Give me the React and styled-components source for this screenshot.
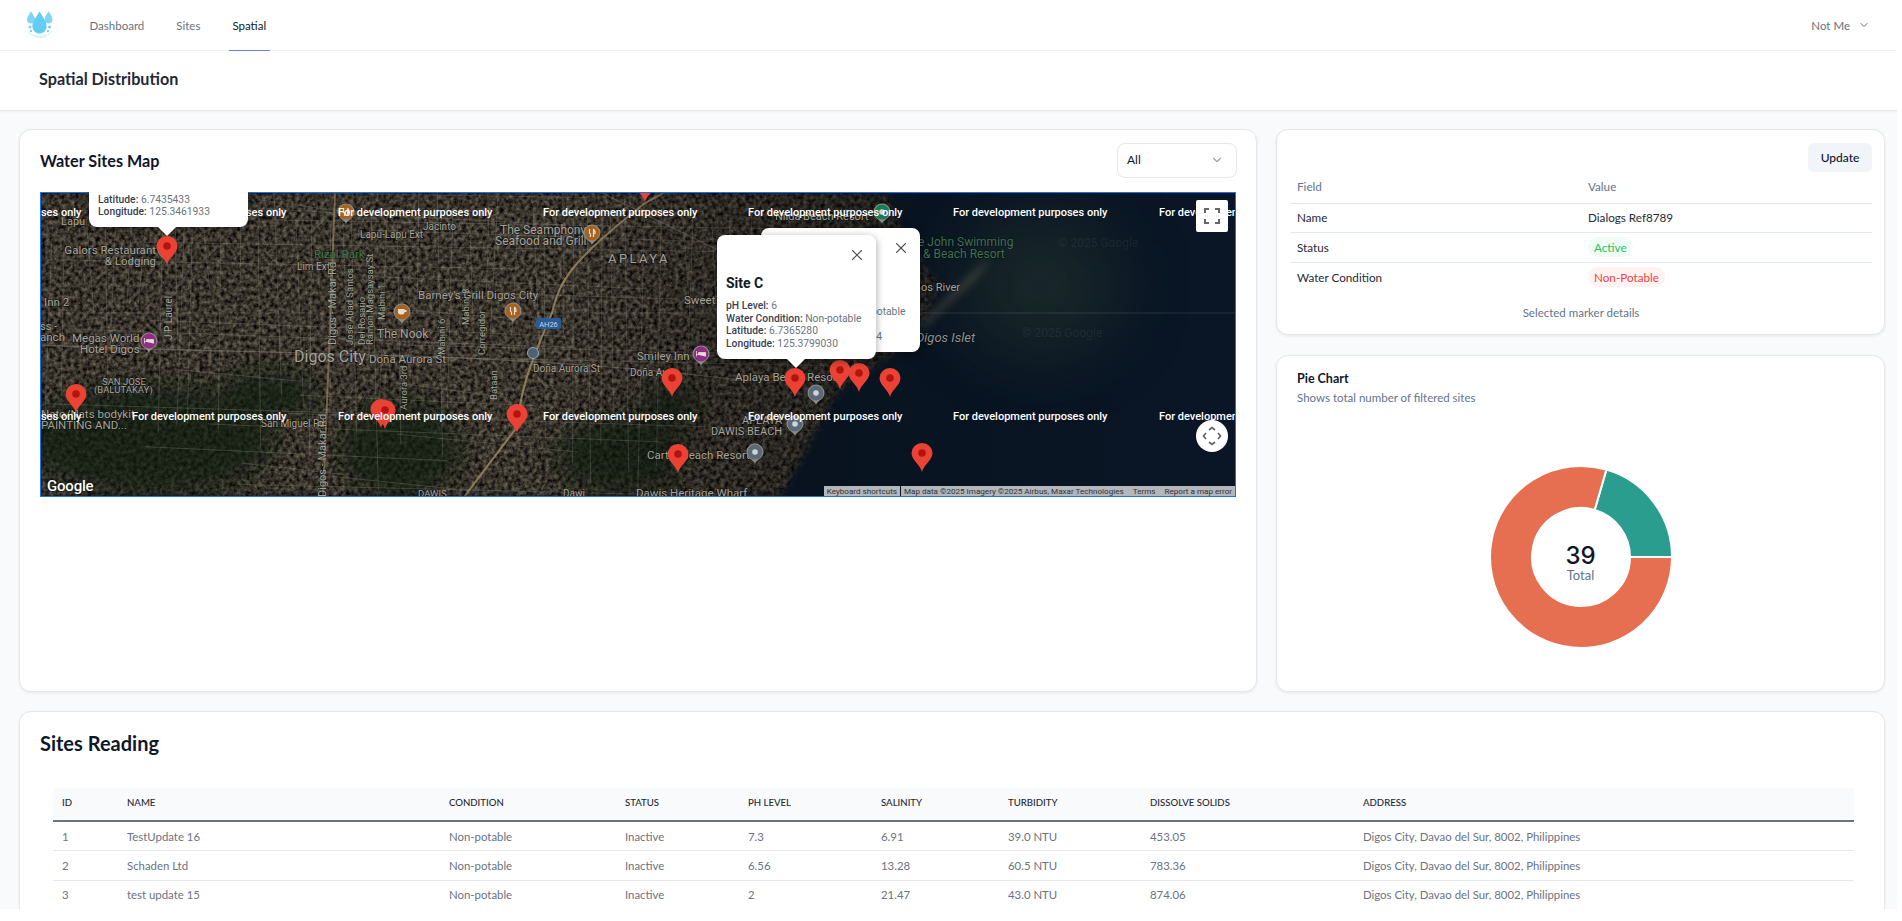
import React, { useMemo } from "react";
import styled, { createGlobalStyle } from "styled-components";
import { ChevronDown, X } from "lucide-react";

const UI = `"Lato", "Inter", "Liberation Sans", sans-serif`;
const MAPF = `"Roboto", "Liberation Sans", sans-serif`;

const Global = createGlobalStyle`
  html, body { margin: 0; padding: 0; background: #fff; overflow: hidden; }
  * { box-sizing: border-box; }
  body { font-family: ${UI}; }
`;

const Frame = styled.div`
  width: 1897px; height: 909px; overflow: hidden; background: #f9fafb;
  display: flex; flex-direction: column;
`;
const NavBar = styled.header`
  height: 51px; flex: none; background: #fff; border-bottom: 1px solid #f0f1f3;
  display: flex; align-items: stretch; padding: 0 27px 0 26px;
`;
const LogoBox = styled.div` width: 28px; height: 30px; margin-top: 9px; flex: none; `;
const NavLinks = styled.nav` display: flex; margin-left: 32px; gap: 25px; `;
const NavLink = styled.a`
  display: flex; align-items: center; padding: 0 3.5px; font-size: 11.5px; height: 51px;
  color: ${p => (p.$active ? "#111827" : "#6b7280")};
  border-bottom: 1px solid ${p => (p.$active ? "#6b7ff0" : "transparent")};
`;
const UserMenu = styled.div`
  margin-left: auto; display: flex; align-items: center; gap: 8px; font-size: 11.5px; color: #6b7280;
`;
const PageHeader = styled.div`
  height: 60px; flex: none; background: #fff; border-bottom: 1px solid #e5e7eb;
  box-shadow: 0 1px 2px rgba(0,0,0,.04); display: flex; align-items: center; padding: 0 0 5px 39px;
`;
const PageTitle = styled.h1` margin: 0; font-size: 16.2px; font-weight: 700; color: #1f2937; `;
const Content = styled.main`
  padding: 18px 12px 0 19px; display: flex; flex-direction: column; gap: 19px;
`;
const TopGrid = styled.div` display: grid; grid-template-columns: 1238px 609px; gap: 19px; height: 563px; `;
const Card = styled.section`
  background: #fff; border: 1px solid #e5e7eb; border-radius: 12px;
  box-shadow: 0 1px 3px rgba(0,0,0,.08);
`;
const MapCard = styled(Card)` padding: 12px 20px 0 20px; `;
const MapHead = styled.div` display: flex; align-items: center; justify-content: space-between; height: 36px; margin-bottom: 14px; `;
const CardTitle = styled.h2` margin: 0; font-size: 16.2px; font-weight: 700; color: #0f172a; `;
const SelectBox = styled.div`
  width: 120px; height: 35px; margin-right: -1px; border: 1px solid #e5e7eb; border-radius: 8px; display: flex; align-items: center;
  justify-content: space-between; padding: 0 12px 1px 9px; font-size: 12px; color: #111827; background: #fff;
`;
const MapFrame = styled.div`
  position: relative; width: 1196px; height: 305px; overflow: hidden; background: #07111c;
  outline: 1px solid #1a73e8; outline-offset: -1px; font-family: ${MAPF};
`;
const MapArt = styled.svg` display: block; width: 1196px; height: 305px; `;
const InfoWindow = styled.div`
  position: absolute; width: 159px; background: #fff; border-radius: 8px; box-shadow: 0 2px 7px 1px rgba(0,0,0,.3);
  left: ${p => p.$x}px; top: ${p => p.$y}px; height: ${p => p.$h}px; padding: 0 9px; font-size: 10.3px; line-height: 12.7px; color: #6b7280;
  &::after {
    content: ""; position: absolute; left: ${p => p.$tip}px; bottom: -9px; border-left: 9px solid transparent;
    border-right: 9px solid transparent; border-top: 9px solid #fff; display: ${p => (p.$noTip ? "none" : "block")};
  }
`;
const InfoClose = styled.span` position: absolute; right: 10px; top: 11px; color: #555; display: flex; `;
const InfoName = styled.div` margin-top: 39px; margin-bottom: 8px; font-size: 14px; line-height: 18px; font-weight: 700; color: #111827; `;
const InfoLine = styled.div` white-space: nowrap; `;
const InfoKey = styled.b` font-weight: 500; color: #374151; `;
const InfoTail = styled.div` position: absolute; left: 9px; bottom: 8px; `;
const MapButton = styled.div`
  position: absolute; right: 8px; width: 32px; height: 32px; background: #fff; display: flex; align-items: center; justify-content: center;
  top: ${p => p.$y}px; border-radius: ${p => (p.$round ? "50%" : "2px")}; color: #666;
`;
const Attribution = styled.div`
  position: absolute; right: 1px; bottom: 1px; height: 10px; display: flex; gap: 1px; font-size: 8.1px; line-height: 10px; color: #333;
`;
const AttrCell = styled.span`
  background: rgba(245,245,245,.72); padding: 0 3px; white-space: nowrap; display: flex; gap: 9px;
`;
const GoogleMark = styled.div` position: absolute; left: 7px; bottom: 2px; color: #fff; font-size: 15px; line-height: 18px; font-weight: 500; letter-spacing: -.2px; text-shadow: 0 0 2px #000; `;

const SideColumn = styled.div` display: grid; grid-template-rows: 206px 337px; gap: 20px; `;
const DetailCard = styled(Card)` padding: 13px 12px 0 13px; display: flex; flex-direction: column; `;
const UpdateRow = styled.div` display: flex; justify-content: flex-end; `;
const UpdateButton = styled.button`
  width: 64px; height: 29px; border: 0; border-radius: 6px; background: #f1f5f9; color: #0f172a; font: 500 12px ${UI};
`;
const DetailTable = styled.table` width: 100%; border-collapse: collapse; table-layout: fixed; font-size: 11.7px; color: #1f2937; `;
const DetailHead = styled.th`
  text-align: left; font-weight: 400; color: #64748b; height: 31px; padding: 0 0 2px 7px; border-bottom: 1px solid #e2e8f0;
`;
const DetailCell = styled.td`
  height: 29.5px; padding: 0 0 ${p => (p.$up ? "2px" : "0")} 7px; border-bottom: ${p => (p.$last ? "0" : "1px solid #e2e8f0")};
`;
const Badge = styled.span`
  display: inline-block; padding: 0 6px; height: 20px; line-height: 20px; border-radius: 10px;
  background: ${p => (p.$ok ? "#f0fdf4" : "#fef2f2")}; color: ${p => (p.$ok ? "#22c55e" : "#ef4444")};
`;
const Caption = styled.div` text-align: center; font-size: 11.5px; color: #64748b; margin-top: 14px; `;
const PieCard = styled(Card)` padding: 15px 20px; display: flex; flex-direction: column; `;
const PieTitle = styled.div` font-size: 12.5px; line-height: 16px; font-weight: 700; color: #0f172a; `;
const PieSub = styled.div` font-size: 11.5px; line-height: 16px; margin-top: 3px; color: #64748b; `;
const DonutWrap = styled.div` margin: 58px auto 0; position: relative; width: 186px; height: 186px; `;
const DonutLabel = styled.div` position: absolute; inset: 0; display: flex; flex-direction: column; align-items: center; justify-content: center; padding-top: 12px; `;
const DonutNum = styled.div` font-family: "Inter", sans-serif; font-size: 24px; line-height: 23px; font-weight: 500; color: #0f172a; `;
const DonutCap = styled.div` font-size: 13px; line-height: 16px; color: #64748b; `;

const ReadingCard = styled(Card)` padding: 19px 32px 0 33px; height: 300px; `;
const ReadingTitle = styled.h2` margin: 0 0 33px -13px; font-size: 20px; line-height: 24px; font-weight: 700; color: #0f172a; `;
const ReadTable = styled.table` width: 1801px; table-layout: fixed; border-collapse: collapse; `;
const ReadHead = styled.th`
  height: 33px; background: #f9fafb; border-bottom: 2px solid #6b7280; text-align: left; padding: 0 0 3px 9px;
  font-size: 9.6px; font-weight: 500; color: #1f2937; text-transform: uppercase;
`;
const ReadCell = styled.td`
  height: 29.5px; border-bottom: 1px solid #e5e7eb; padding: 0 0 0 9px; font-size: 11.4px; color: #6b7280; white-space: nowrap;
`;

const cols = [65, 322, 176, 123, 133, 127, 142, 213, 500];
const heads = ["ID", "Name", "Condition", "Status", "pH Level", "Salinity", "Turbidity", "Dissolve Solids", "Address"];
const ADDR = "Digos City, Davao del Sur, 8002, Philippines";
const rows = [
  [1, "TestUpdate 16", "Non-potable", "Inactive", "7.3", "6.91", "39.0 NTU", "453.05", ADDR],
  [2, "Schaden Ltd", "Non-potable", "Inactive", "6.56", "13.28", "60.5 NTU", "783.36", ADDR],
  [3, "test update 15", "Non-potable", "Inactive", "2", "21.47", "43.0 NTU", "874.06", ADDR],
];

const pins = [[167,265],[76,413],[381,428],[385,429],[517,433],[645,202],[672,397],[795,397],[840,389],[859,392],[890,397],[678,473],[922,472]];
const pois = [
  [346,224,"#a8621f","fork"],[592,245,"#a8621f","fork"],[402,324,"#a8621f","cup"],[513,323,"#a8621f","fork"],[149,353,"#8d2f85","bed"],[882,224,"#1d7a52","dot"],
  [701,366,"#8d2f85","bed"],[816,405,"#5c6a78","dot"],[795,436,"#5c6a78","dot"],[755,464,"#5c6a78","dot"],[166,262,"#8d2f85","bed"],
];
const labels = [
  ["Galors Restaurant",156,254,11.5,"end"],["& Lodging",156,265,11.5,"end"],["Lapu",61,225,11],["Rizal Park",314,258,11.5,"start","#3d7a4c"],
  ["Lim Ext",297,270,10],["Lapu-Lapu Ext",360,238,10],["Jacinto",423,230,10],["The Seamphony",500,234,12],["Seafood and Grill",495,245,12],
  ["Barney's Grill Digos City",418,299,11.5],["The Nook",377,338,12],["Digos City",294,362,16],["Doña Aurora St",369,363,11.5],
  ["Doña Aurora St",533,372,10],["Megas World",72,342,11.5],["Hotel Digos",80,353,11.5],["Inn 2",44,306,11.5],["anch",40,341,11.5],
  ["ss -",40,330,11],["SAN JOSE",102,385,9.5],["(BALUTAKAY)",94,393,9.5],["Nato/Nats bodykit",41,418,11.5],["PAINTING AND...",41,429,11.5],
  ["San Miguel Rd",261,427,10],["Smiley Inn",637,360,11.5],["Sweet",684,304,11.5],["Doña Au",630,376,10],["Aplaya Beach Resort",735,381,11.5],
  ["e John Swimming",918,246,12,"start","#3f7050"],["& Beach Resort",923,258,12,"start","#3f7050"],["os River",921,291,11],["APLAYA",742,424,11],
  ["DAWIS BEACH",711,435,11],["Carter Beach Resort",647,459,11.5],["Dawis Heritage Wharf",636,497,11.5],["Nilda Beach Resort",775,220,11],["DAWIS",418,497,9.5],["Dawi",563,497,10],
];
const vertical = [
  ["J P Laurel",172,340,10],["Digos - Makar Rd",336,345,11],["Digos - Makar Rd",326,497,11],["Jose Abad Santos",353,345,9.5],["Del Rosario",365,345,9.5],
  ["Ramon Magsaysay St",373,345,9.5],["Mabini 1",385,320,9.5],["Mabini 6",445,355,9.5],["Mabini 8",469,325,9.5],["Corregidor",485,355,9.5],["Aurora 3rd",407,410,9.5],["Bataan",497,400,9.5],
];

function seeded(n) { let s = n; return () => (s = (s * 16807) % 2147483647) / 2147483647; }

function Pin({ x, y }) {
  return (
    <g transform={`translate(${x} ${y})`}>
      <path d="M0 0C-1.5-7-10.5-12-10.5-19A10.5 10 0 1 1 10.5-19C10.5-12 1.5-7 0 0Z" fill="#ea4335" />
      <circle cy="-19" r="3.8" fill="#b3140f" />
    </g>
  );
}
const glyphs = {
  fork: <path d="M-2.5-16V-12.5Q-2.5-11-1.5-11V-8M1.5-16V-8M1.5-16Q3.5-14 3-11.5H1.5" fill="none" stroke="#e3ddd2" strokeWidth="1.2" />,
  cup: <path d="M-4-15H2.5V-11.5Q2.5-9.5 0-9.5H-1.5Q-4-9.5-4-11.5ZM2.5-14H4.5V-12H2.5" fill="#e3ddd2" />,
  bed: <path d="M-4.5-9.5V-15M-4.5-11.5H4.5V-9.5M-2.5-13.5H4.5V-11.5H-2.5Z" fill="#e3ddd2" stroke="#e3ddd2" strokeWidth=".8" />,
  dot: <circle cy="-12" r="2.8" fill="#cfd4d8" />,
};
function Poi({ x, y, c, g }) {
  return (
    <g transform={`translate(${x} ${y})`}>
      <path d="M0 0C-1-4-8.5-6-8.5-12A8.5 8.5 0 1 1 8.5-12C8.5-6 1-4 0 0Z" fill="#8d8d8a" />
      <circle cy="-12" r="7.4" fill={c} />
      {glyphs[g]}
    </g>
  );
}

function MapDrawing() {
  const roads = useMemo(() => {
    const r = seeded(77); const out = [];
    for (let x = 40; x < 960; x += 8 + r() * 14) {
      const t = (r() - .5) * 16; out.push(`M${x} ${192 + r() * 40}L${x + t} ${290 + r() * 210}`);
    }
    for (let y = 192; y < 500; y += 7 + r() * 11) {
      const a = 40 + r() * 400; out.push(`M${a} ${y}L${a + 90 + r() * 520} ${y + 12 + (r() - .5) * 14}`);
    }
    return out.join("");
  }, []);
  const land = "M40 192H886L905 240L940 285L925 320L900 350L837 393L781 497H40Z";
  const wide = { filterUnits: "userSpaceOnUse", x: -200, y: -200, width: 2200, height: 1200 };
  return (
    <MapArt viewBox="40 192 1196 305">
      <defs>
        <filter id="cityNoise" x="0" y="0" width="100%" height="100%" colorInterpolationFilters="sRGB">
          <feTurbulence type="fractalNoise" baseFrequency="0.24" numOctaves="3" seed="9" />
          <feColorMatrix values="0.62 0 0 0 -0.09  0.58 0 0 0 -0.09  .48 0 0 0 -0.07  0 0 0 0 1" />
          <feGaussianBlur stdDeviation=".5" />
        </filter>
        <filter id="soft" {...wide}><feGaussianBlur stdDeviation="11" /></filter>
        <filter id="sand" {...wide}><feGaussianBlur stdDeviation="4" /></filter>
        <filter id="edge" {...wide}><feGaussianBlur stdDeviation="3" /></filter>
        <filter id="softer" {...wide}><feGaussianBlur stdDeviation="34" /></filter>
        <mask id="landMask" maskUnits="userSpaceOnUse" x="-200" y="-200" width="2200" height="1200">
          <path d={land} fill="#fff" filter="url(#edge)" />
        </mask>
        <linearGradient id="sea" x1="0" x2="1" y1="0" y2="0">
          <stop offset="0" stopColor="#060d14" /><stop offset="1" stopColor="#0a1626" />
        </linearGradient>
        <linearGradient id="fade" gradientUnits="userSpaceOnUse" x1="560" x2="900" y1="0" y2="0">
          <stop offset="0" stopColor="#000" stopOpacity="0" /><stop offset="1" stopColor="#04080c" stopOpacity=".5" />
        </linearGradient>
      </defs>
      <rect x="40" y="192" width="1196" height="305" fill="url(#sea)" />
      <ellipse cx="1040" cy="285" rx="80" ry="70" fill="#26382f" opacity=".5" filter="url(#softer)" />
      <path d="M918 335C945 300 975 285 990 258L950 296L925 320Z" fill="#85805a" opacity=".55" filter="url(#sand)" />
      <g mask="url(#landMask)">
        <rect x="40" y="192" width="1000" height="305" filter="url(#cityNoise)" />
        <g filter="url(#soft)" fill="#0f1f0d" opacity=".68">
          <ellipse cx="150" cy="440" rx="125" ry="55" />
          <ellipse cx="400" cy="450" rx="60" ry="50" />
          <ellipse cx="620" cy="455" rx="65" ry="38" />
          <ellipse cx="270" cy="395" rx="50" ry="25" />
          <ellipse cx="670" cy="405" rx="28" ry="22" />
        </g>
        <path d={roads} stroke="#8c887d" strokeOpacity=".36" strokeWidth=".9" fill="none" />
        <path d="M464 497L517 427C520 395 527 370 552 313C560 280 570 262 645 203L665 192" stroke="#9a8a62" strokeWidth="2" fill="none" opacity=".85" />
        <path d="M335 192L330 330L323 497" stroke="#8f7f58" strokeWidth="2" fill="none" opacity=".75" />
        <path d="M40 345C250 355 500 350 740 380M600 192L880 330" stroke="#8a8679" strokeWidth="1.3" fill="none" opacity=".5" />
        <rect x="560" y="192" width="480" height="305" fill="url(#fade)" />
      </g>
      <line x1="40" x2="1236" y1="313" y2="313" stroke="#fff" strokeOpacity=".12" />
      <g fontFamily={MAPF} stroke="#000" strokeOpacity=".35" strokeWidth="1.4" paintOrder="stroke">
        {labels.map(([t, x, y, s, a, c], i) => (
          <text key={i} x={x} y={y} fontSize={s} textAnchor={a || "start"} fill={c || "#a5a39a"}>{t}</text>
        ))}
        <text x="608" y="263" fontSize="13" letterSpacing="2.4" fill="#a5a39a">APLAYA</text>
        <text x="916" y="342" fontSize="13" fontStyle="italic" fill="#8f938d">Digos Islet</text>
        {vertical.map(([t, x, y, s], i) => (
          <text key={i} transform={`translate(${x} ${y}) rotate(-90)`} fontSize={s} fill="#a5a39a">{t}</text>
        ))}
      </g>
      <text x="1058" y="247" fontFamily={MAPF} fontSize="12" fill="#fff" opacity=".05">© 2025 Google</text>
      <text x="1022" y="337" fontFamily={MAPF} fontSize="12" fill="#fff" opacity=".05">© 2025 Google</text>
      <rect x="536" y="318" width="25" height="11" rx="2" fill="#2d5a94" />
      <text x="548.5" y="326.5" fontFamily={MAPF} fontSize="7.5" textAnchor="middle" fill="#c8d6e8">AH26</text>
      <circle cx="533" cy="353" r="5.5" fill="#4d6172" stroke="#9aa5ad" />
      {pois.map(([x, y, c, g], i) => <Poi key={i} x={x} y={y} c={c} g={g} />)}
      {pins.map(([x, y], i) => <Pin key={i} x={x} y={y} />)}
      <g fontFamily={MAPF} fontSize="11" fontWeight="500" fill="#fff">
        {[212, 416].map(y => [-73, 132, 338, 543, 748, 953, 1159].map(x => (
          <text key={`${x}-${y}`} x={x} y={y + 4}>For development purposes only</text>
        )))}
      </g>
    </MapArt>
  );
}

function Expand() {
  return (
    <svg width="16" height="16" viewBox="0 0 16 16" fill="none" stroke="#666" strokeWidth="2">
      <path d="M1 5V1H5M11 1H15V5M15 11V15H11M5 15H1V11" />
    </svg>
  );
}
function PanIcon() {
  return (
    <svg width="20" height="20" viewBox="0 0 20 20" fill="none" stroke="#666" strokeWidth="1.7">
      <path d="M7 4L10 1.5L13 4M7 16L10 18.5L13 16M4 7L1.5 10L4 13M16 7L18.5 10L16 13" />
    </svg>
  );
}
function DropLogo() {
  const drop = "M0-10C3-5 5.5-2 5.5 1.5A5.5 5.5 0 0 1-5.5 1.5C-5.5-2-3-5 0-10Z";
  return (
    <svg width="28" height="30" viewBox="0 0 28 30" style={{ display: "block" }}>
      <g fill="#7fd5f3">
        <path transform="translate(5 9.5) scale(.72)" d={drop} />
        <path transform="translate(22.5 9.5) scale(.72)" d={drop} />
        <circle cx="4" cy="18" r="1.6" /><circle cx="23.5" cy="18" r="1.6" /><circle cx="5" cy="22" r="1.2" /><circle cx="22" cy="22" r="1.2" />
      </g>
      <path transform="translate(13.5 15.5) scale(1.3)" d={drop} fill="#62ccf2" />
      <path d="M2 23C7 29 20 29 25.5 23M8 27C12 29 16 29 20 27" fill="none" stroke="#cfeefa" strokeWidth="1" />
    </svg>
  );
}
function Donut() {
  const cx = 93, cy = 93, R = 91, r = 49;
  const pt = (rad, deg) => [cx + rad * Math.cos((deg * Math.PI) / 180), cy + rad * Math.sin((deg * Math.PI) / 180)];
  const arc = (a, b, large) => {
    const [x1, y1] = pt(R, a), [x2, y2] = pt(R, b), [x3, y3] = pt(r, b), [x4, y4] = pt(r, a);
    return `M${x1} ${y1}A${R} ${R} 0 ${large} 1 ${x2} ${y2}L${x3} ${y3}A${r} ${r} 0 ${large} 0 ${x4} ${y4}Z`;
  };
  return (
    <svg width="186" height="186" viewBox="0 0 186 186" style={{ display: "block" }}>
      <path d={arc(-73.8, 0, 0)} fill="#2a9d8f" stroke="#fff" strokeWidth="2" />
      <path d={arc(0, 286.2, 1)} fill="#e76f51" stroke="#fff" strokeWidth="2" />
    </svg>
  );
}

function SiteInfo({ name, cond, ph, lat, lng }) {
  return (
    <>
      <InfoClose><X size={18} strokeWidth={1.5} /></InfoClose>
      <InfoName>{name}</InfoName>
      <InfoLine><InfoKey>pH Level:</InfoKey> {ph}</InfoLine>
      <InfoLine><InfoKey>Water Condition:</InfoKey> {cond}</InfoLine>
      <InfoLine><InfoKey>Latitude:</InfoKey> {lat}</InfoLine>
      <InfoLine><InfoKey>Longitude:</InfoKey> {lng}</InfoLine>
    </>
  );
}

export default function App() {
  return (
    <Frame>
      <Global />
      <NavBar>
        <LogoBox><DropLogo /></LogoBox>
        <NavLinks>
          <NavLink>Dashboard</NavLink>
          <NavLink>Sites</NavLink>
          <NavLink $active>Spatial</NavLink>
        </NavLinks>
        <UserMenu>Not Me <ChevronDown size={12} /></UserMenu>
      </NavBar>
      <PageHeader><PageTitle>Spatial Distribution</PageTitle></PageHeader>
      <Content>
        <TopGrid>
          <MapCard>
            <MapHead>
              <CardTitle>Water Sites Map</CardTitle>
              <SelectBox>All <ChevronDown size={14} color="#9ca3af" /></SelectBox>
            </MapHead>
            <MapFrame>
              <MapDrawing />
              <InfoWindow $x={49} $y={-60} $h={95} $tip={69}>
                <InfoTail>
                  <InfoLine><InfoKey>Latitude:</InfoKey> 6.7435433</InfoLine>
                  <InfoLine><InfoKey>Longitude:</InfoKey> 125.3461933</InfoLine>
                </InfoTail>
              </InfoWindow>
              <InfoWindow $x={721} $y={36} $h={124} $noTip>
                <SiteInfo name="Site D" ph="7" cond="Non-potable" lat="6.7391254" lng="125.3825454" />
              </InfoWindow>
              <InfoWindow $x={677} $y={43} $h={124} $tip={70}>
                <SiteInfo name="Site C" ph="6" cond="Non-potable" lat="6.7365280" lng="125.3799030" />
              </InfoWindow>
              <MapButton $y={8}><Expand /></MapButton>
              <MapButton $y={228} $round><PanIcon /></MapButton>
              <GoogleMark>Google</GoogleMark>
              <Attribution>
                <AttrCell>Keyboard shortcuts</AttrCell>
                <AttrCell>Map data ©2025 Imagery ©2025 Airbus, Maxar Technologies <span>Terms</span> <span>Report a map error</span></AttrCell>
              </Attribution>
            </MapFrame>
          </MapCard>
          <SideColumn>
            <DetailCard>
              <UpdateRow><UpdateButton>Update</UpdateButton></UpdateRow>
              <DetailTable>
                <thead><tr><DetailHead>Field</DetailHead><DetailHead>Value</DetailHead></tr></thead>
                <tbody>
                  <tr><DetailCell $up>Name</DetailCell><DetailCell $up>Dialogs Ref8789</DetailCell></tr>
                  <tr><DetailCell>Status</DetailCell><DetailCell><Badge $ok>Active</Badge></DetailCell></tr>
                  <tr><DetailCell $last>Water Condition</DetailCell><DetailCell $last><Badge>Non-Potable</Badge></DetailCell></tr>
                </tbody>
              </DetailTable>
              <Caption>Selected marker details</Caption>
            </DetailCard>
            <PieCard>
              <PieTitle>Pie Chart</PieTitle>
              <PieSub>Shows total number of filtered sites</PieSub>
              <DonutWrap>
                <Donut />
                <DonutLabel><DonutNum>39</DonutNum><DonutCap>Total</DonutCap></DonutLabel>
              </DonutWrap>
            </PieCard>
          </SideColumn>
        </TopGrid>
        <ReadingCard>
          <ReadingTitle>Sites Reading</ReadingTitle>
          <ReadTable>
            <colgroup>{cols.map((w, i) => <col key={i} width={w} />)}</colgroup>
            <thead><tr>{heads.map(h => <ReadHead key={h}>{h}</ReadHead>)}</tr></thead>
            <tbody>
              {rows.map(r => <tr key={r[0]}>{r.map((c, i) => <ReadCell key={i}>{c}</ReadCell>)}</tr>)}
            </tbody>
          </ReadTable>
        </ReadingCard>
      </Content>
    </Frame>
  );
}
